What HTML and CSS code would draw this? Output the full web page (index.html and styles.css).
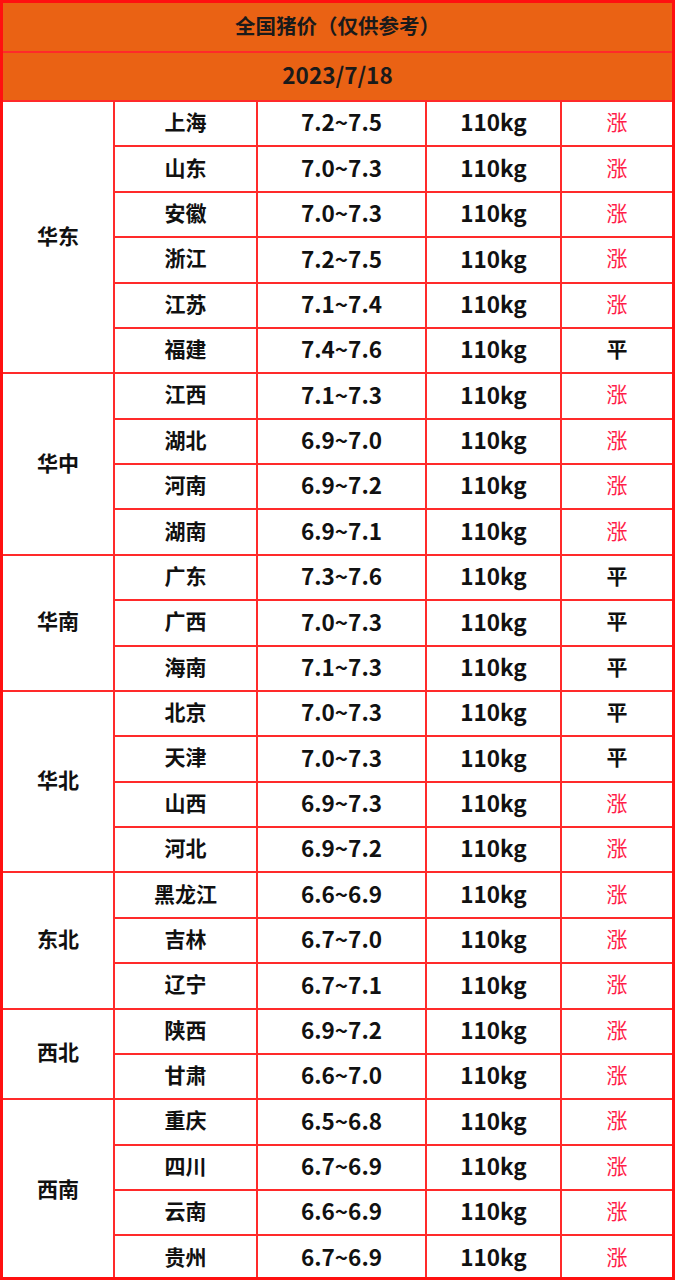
FILE: index.html
```html
<!DOCTYPE html>
<html lang="zh-CN">
<head>
<meta charset="utf-8">
<link rel="stylesheet" href="styles.css">
</head>
<body>
<div class="frame">
<table class="price">
<colgroup><col class="c1"><col class="c2"><col class="c3"><col class="c4"><col class="c5"></colgroup>
<tr class="head"><td colspan="5" class="title">全国猪价（仅供参考）</td></tr>
<tr class="head"><td colspan="5" class="num">2023/7/18</td></tr>
<tr><td rowspan="6">华东</td><td>上海</td><td class="num">7.2~7.5</td><td class="num">110kg</td><td class="up">涨</td></tr>
<tr><td>山东</td><td class="num">7.0~7.3</td><td class="num">110kg</td><td class="up">涨</td></tr>
<tr><td>安徽</td><td class="num">7.0~7.3</td><td class="num">110kg</td><td class="up">涨</td></tr>
<tr><td>浙江</td><td class="num">7.2~7.5</td><td class="num">110kg</td><td class="up">涨</td></tr>
<tr><td>江苏</td><td class="num">7.1~7.4</td><td class="num">110kg</td><td class="up">涨</td></tr>
<tr><td>福建</td><td class="num">7.4~7.6</td><td class="num">110kg</td><td>平</td></tr>
<tr><td rowspan="4">华中</td><td>江西</td><td class="num">7.1~7.3</td><td class="num">110kg</td><td class="up">涨</td></tr>
<tr><td>湖北</td><td class="num">6.9~7.0</td><td class="num">110kg</td><td class="up">涨</td></tr>
<tr><td>河南</td><td class="num">6.9~7.2</td><td class="num">110kg</td><td class="up">涨</td></tr>
<tr><td>湖南</td><td class="num">6.9~7.1</td><td class="num">110kg</td><td class="up">涨</td></tr>
<tr><td rowspan="3">华南</td><td>广东</td><td class="num">7.3~7.6</td><td class="num">110kg</td><td>平</td></tr>
<tr><td>广西</td><td class="num">7.0~7.3</td><td class="num">110kg</td><td>平</td></tr>
<tr><td>海南</td><td class="num">7.1~7.3</td><td class="num">110kg</td><td>平</td></tr>
<tr><td rowspan="4">华北</td><td>北京</td><td class="num">7.0~7.3</td><td class="num">110kg</td><td>平</td></tr>
<tr><td>天津</td><td class="num">7.0~7.3</td><td class="num">110kg</td><td>平</td></tr>
<tr><td>山西</td><td class="num">6.9~7.3</td><td class="num">110kg</td><td class="up">涨</td></tr>
<tr><td>河北</td><td class="num">6.9~7.2</td><td class="num">110kg</td><td class="up">涨</td></tr>
<tr><td rowspan="3">东北</td><td>黑龙江</td><td class="num">6.6~6.9</td><td class="num">110kg</td><td class="up">涨</td></tr>
<tr><td>吉林</td><td class="num">6.7~7.0</td><td class="num">110kg</td><td class="up">涨</td></tr>
<tr><td>辽宁</td><td class="num">6.7~7.1</td><td class="num">110kg</td><td class="up">涨</td></tr>
<tr><td rowspan="2">西北</td><td>陕西</td><td class="num">6.9~7.2</td><td class="num">110kg</td><td class="up">涨</td></tr>
<tr><td>甘肃</td><td class="num">6.6~7.0</td><td class="num">110kg</td><td class="up">涨</td></tr>
<tr><td rowspan="4">西南</td><td>重庆</td><td class="num">6.5~6.8</td><td class="num">110kg</td><td class="up">涨</td></tr>
<tr><td>四川</td><td class="num">6.7~6.9</td><td class="num">110kg</td><td class="up">涨</td></tr>
<tr><td>云南</td><td class="num">6.6~6.9</td><td class="num">110kg</td><td class="up">涨</td></tr>
<tr><td>贵州</td><td class="num">6.7~6.9</td><td class="num">110kg</td><td class="up">涨</td></tr>
</table>
</div>
</body>
</html>
```
FILE: styles.css
```css
html, body {
  margin: 0;
  padding: 0;
  background: #ffffff;
}
.frame {
  box-sizing: border-box;
  width: 675px;
  height: 1280px;
  border: 3px solid #ff1010;
  overflow: hidden;
}
.price {
  width: 669px;
  height: 1274px;
  border-collapse: collapse;
  border-style: hidden;
  table-layout: fixed;
  font-family: "Noto Sans CJK SC", "Noto Sans", sans-serif;
  font-weight: 700;
  font-size: 21px;
  color: #111111;
}
.c1 { width: 111px; }
.c2 { width: 143px; }
.c3 { width: 169px; }
.c4 { width: 135px; }
.c5 { width: 111px; }
.price td {
  border: 2px solid #ff2a2a;
  text-align: center;
  vertical-align: middle;
  padding: 0 0 4px 0;
  line-height: 1;
}
.price tr { height: 45.38px; }
.price tr.head { height: 49px; }
.price tr.head td {
  background: #ea6214;
  color: #1a1a1a;
}
.price td.title { font-size: 20.5px; }
.price td.num { font-size: 22.5px; }
.price td.up {
  color: #ff1e4a;
  font-weight: 400;
}
```
